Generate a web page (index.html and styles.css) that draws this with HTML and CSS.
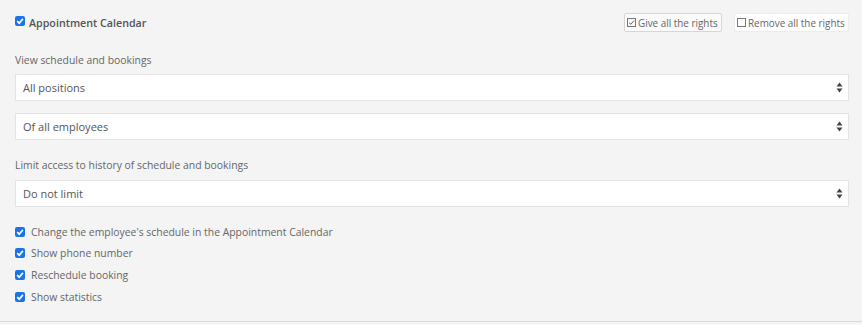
FILE: index.html
```html
<!DOCTYPE html>
<html>
<head>
<meta charset="utf-8">
<link rel="stylesheet" href="styles.css">
</head>
<body>
<div class="panel">
  <div class="header">
    <label class="title">
      <span class="cb"><svg viewBox="0 0 10 10" width="10" height="10"><path d="M2.2 5.2 L4.2 7.2 L7.9 2.9" fill="none" stroke="#fff" stroke-width="1.7"/></svg></span>
      <span>Appointment Calendar</span>
    </label>
    <div class="actions">
      <button class="btn btn-give"><span class="box"><svg viewBox="0 0 9 9" width="9" height="9"><path d="M2 4.6 L3.8 6.3 L7 2.6" fill="none" stroke="#666" stroke-width="1"/></svg></span>Give all the rights</button>
      <button class="btn btn-remove"><span class="box"></span>Remove all the rights</button>
    </div>
  </div>

  <div class="label label-first">View schedule and bookings</div>
  <div class="select"><span>All positions</span><svg class="arrow" viewBox="0 0 7 11" width="7" height="11"><path d="M3.5 0.5 L6.5 4.5 L0.5 4.5 Z M0.5 6.5 L6.5 6.5 L3.5 10.5 Z" fill="#444"/></svg></div>
  <div class="select select-second"><span>Of all employees</span><svg class="arrow" viewBox="0 0 7 11" width="7" height="11"><path d="M3.5 0.5 L6.5 4.5 L0.5 4.5 Z M0.5 6.5 L6.5 6.5 L3.5 10.5 Z" fill="#444"/></svg></div>

  <div class="label label-second">Limit access to history of schedule and bookings</div>
  <div class="select"><span>Do not limit</span><svg class="arrow" viewBox="0 0 7 11" width="7" height="11"><path d="M3.5 0.5 L6.5 4.5 L0.5 4.5 Z M0.5 6.5 L6.5 6.5 L3.5 10.5 Z" fill="#444"/></svg></div>

  <ul class="options">
    <li><span class="cb"><svg viewBox="0 0 10 10" width="10" height="10"><path d="M2.2 5.2 L4.2 7.2 L7.9 2.9" fill="none" stroke="#fff" stroke-width="1.7"/></svg></span>Change the employee's schedule in the Appointment Calendar</li>
    <li><span class="cb"><svg viewBox="0 0 10 10" width="10" height="10"><path d="M2.2 5.2 L4.2 7.2 L7.9 2.9" fill="none" stroke="#fff" stroke-width="1.7"/></svg></span>Show phone number</li>
    <li><span class="cb"><svg viewBox="0 0 10 10" width="10" height="10"><path d="M2.2 5.2 L4.2 7.2 L7.9 2.9" fill="none" stroke="#fff" stroke-width="1.7"/></svg></span>Reschedule booking</li>
    <li><span class="cb"><svg viewBox="0 0 10 10" width="10" height="10"><path d="M2.2 5.2 L4.2 7.2 L7.9 2.9" fill="none" stroke="#fff" stroke-width="1.7"/></svg></span>Show statistics</li>
  </ul>
</div>
</body>
</html>
```
FILE: styles.css
```css
html, body {
  margin: 0;
  padding: 0;
  background: #f4f4f4;
}
body {
  font-family: "Open Sans", "Noto Sans", sans-serif;
  color: #666;
  width: 862px;
  height: 325px;
  overflow: hidden;
}
.panel {
  padding: 13px 13px 0 15px;
  height: 308px;
  border-bottom: 1px solid #dcdcdc;
}
.header {
  display: flex;
  justify-content: space-between;
  align-items: center;
  height: 19px;
}
.title {
  display: flex;
  align-items: center;
  font-size: 10.7px;
  font-weight: 600;
  color: #555;
}
.title .cb {
  margin-right: 4px;
  position: relative;
  top: -2px;
}
.cb {
  display: inline-flex;
  width: 10px;
  height: 10px;
  background: #1a73e8;
  border-radius: 2px;
  flex: none;
}
.cb svg { display: block; }
.actions {
  display: flex;
  gap: 12px;
}
.btn {
  display: flex;
  align-items: center;
  justify-content: flex-start;
  white-space: nowrap;
  box-sizing: border-box;
  height: 19px;
  padding: 0 0 0 2px;
  font-family: inherit;
  font-size: 9.9px;
  color: #666;
  background: #fafafa;
  border: 1px solid #ddd;
  border-radius: 2px;
  cursor: pointer;
}
.btn-give { width: 98px; border-color: #d6d6d6; }
.btn-remove { width: 115px; background: #fff; border-color: #ececec; }
.box {
  display: inline-flex;
  width: 9px;
  height: 9px;
  box-sizing: border-box;
  border: 1px solid #777;
  margin-right: 2px;
  flex: none;
  position: relative;
}
.box svg { position: absolute; left: -1px; top: -1px; }
.label {
  font-size: 10.4px;
  line-height: 14px;
  color: #666;
}
.label-first { margin-top: 21px; margin-bottom: 7px; }
.label-second { margin-top: 18px; margin-bottom: 8px; }
.select {
  display: flex;
  align-items: center;
  justify-content: space-between;
  box-sizing: border-box;
  height: 27px;
  background: #fff;
  border: 1px solid #e3e3e3;
  padding: 0 5px 0 7px;
  font-size: 11px;
  color: #555;
}
.select-second { margin-top: 12px; }
.arrow { display: block; }
.options {
  list-style: none;
  margin: 14px 0 0;
  padding: 0;
}
.options li {
  display: flex;
  align-items: center;
  height: 21.67px;
  font-size: 10.4px;
  color: #666;
}
.options .cb { margin-right: 6px; }
```
